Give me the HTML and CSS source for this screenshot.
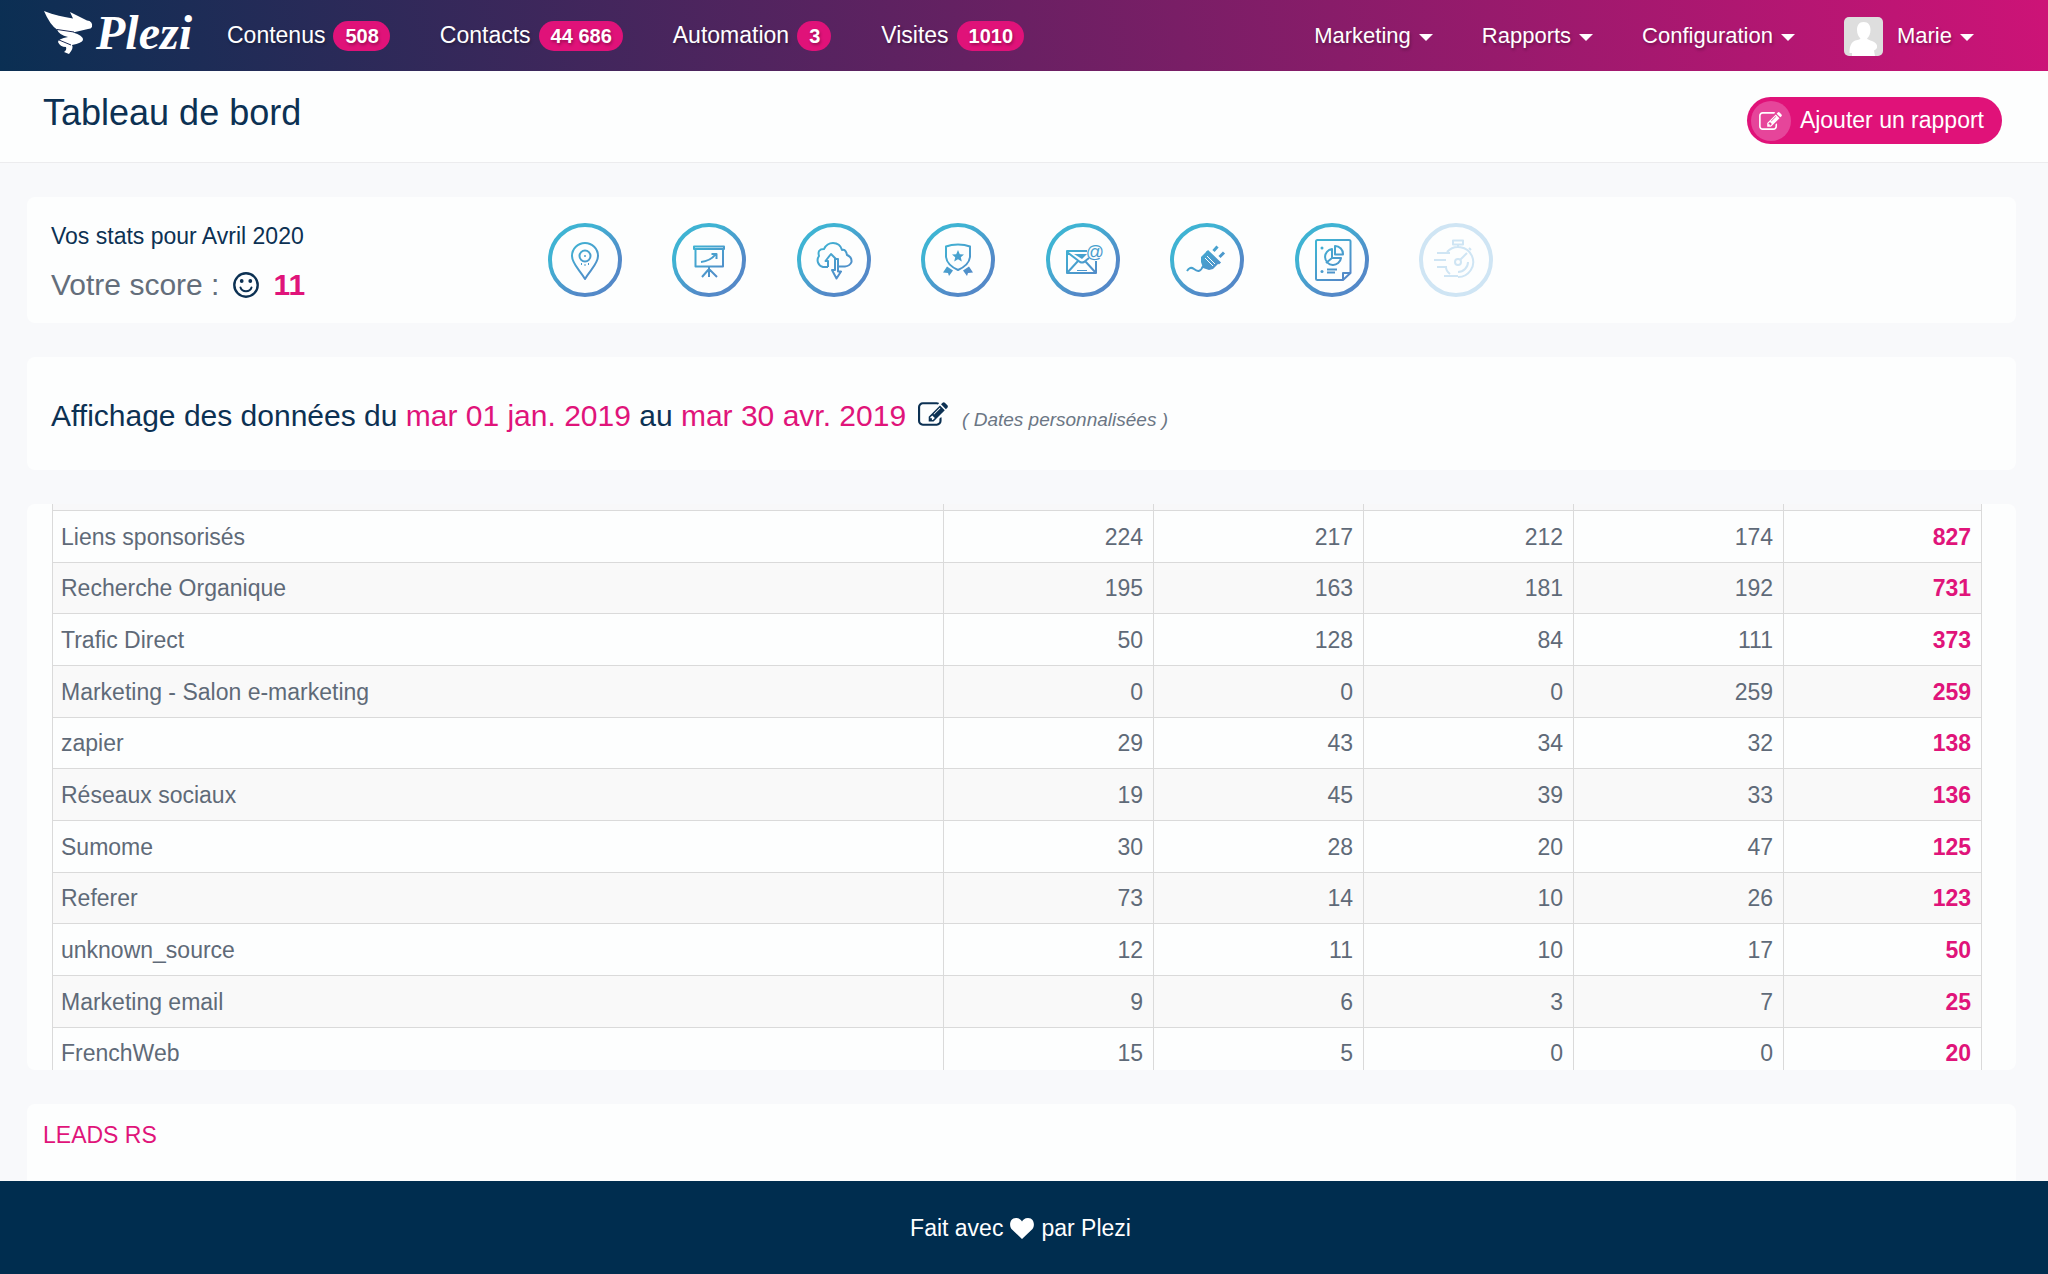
FILE: index.html
```html
<!DOCTYPE html>
<html lang="fr">
<head>
<meta charset="utf-8">
<meta name="viewport" content="width=device-width, initial-scale=1">
<title>Plezi - Tableau de bord</title>
<link rel="stylesheet" href="styles.css">
</head>
<body>
<svg class="defs" width="0" height="0" aria-hidden="true">
  <defs>
    <linearGradient id="ocean" gradientUnits="userSpaceOnUse" x1="14" y1="10" x2="60" y2="64">
      <stop offset="0.2" stop-color="#3fb3d3"/>
      <stop offset="0.8" stop-color="#5389c8"/>
    </linearGradient>
    <symbol id="edit" viewBox="0 128 1792 1408">
      <path d="M888 1184l116-116-152-152-116 116v56h96v96h56zm440-720q-16-16-33 1l-350 350q-17 17-1 33t33-1l350-350q17-17 1-33zm80 594v190q0 119-84.500 203.500t-203.500 84.500h-832q-119 0-203.500-84.500t-84.500-203.500v-832q0-119 84.500-203.500t203.500-84.500h832q63 0 117 25 15 7 18 23 3 17-9 29l-49 49q-14 14-32 8-23-6-45-6h-832q-66 0-113 47t-47 113v832q0 66 47 113t113 47h832q66 0 113-47t47-113v-126q0-13 9-22l64-64q15-15 35-7t20 29zm-96-738l288 288-672 672h-288v-288zm444 132l-92 92-288-288 92-92q28-28 68-28t68 28l152 152q28 28 28 68t-28 68z"/>
    </symbol>
  </defs>
</svg>

<header class="topbar">
  <a class="logo" href="#" aria-label="Plezi">
    <svg class="logo-wing" viewBox="0 0 50 44" aria-hidden="true">
      <path d="M0 0C10 4 20 6 29 7.500L26 1L43 9.500Q49 10 48 16Q47 18 44 18L29 21.500Q39 24 39 29Q38 32 28 34Q30 37 25 43L20 41Q23 39 22 36Q16 36 14 31Q14 28 24 26Q15 24 13 18.500Q6 14 0 0Z" fill="#fff"/>
      <path d="M13 18.500L30 21M15 29L27 34" stroke="#1c2a55" stroke-width="1" fill="none"/>
    </svg>
    <span class="logo-name">Plezi</span>
  </a>
  <nav class="nav-main">
    <a class="nav-link" href="#">Contenus <span class="badge">508</span></a>
    <a class="nav-link" href="#">Contacts <span class="badge">44 686</span></a>
    <a class="nav-link" href="#">Automation <span class="badge">3</span></a>
    <a class="nav-link" href="#">Visites <span class="badge">1010</span></a>
  </nav>
  <div class="nav-menus">
    <button class="menu" type="button">Marketing<span class="caret"></span></button>
    <button class="menu" type="button">Rapports<span class="caret"></span></button>
    <button class="menu" type="button">Configuration<span class="caret"></span></button>
    <button class="menu" type="button">
      <svg class="avatar" viewBox="0 0 39 39" aria-hidden="true">
        <rect width="39" height="39" rx="5" fill="#dedede"/>
        <path d="M19.500 5c5 0 7 3.500 7 8 0 4-1.500 6.500-3.500 8.500 1 2 9 2.500 10 7 .5 3-1 4-3 5l1 5.500H8V36H5.500c0-4 .5-9 4-11.500 2-1.500 6-1.500 7-3-2-2-3.500-4.500-3.500-8.500 0-4.500 2-8 6.500-8z" fill="#fff"/>
      </svg>Marie<span class="caret"></span></button>
  </div>
</header>

<div class="titlebar">
  <h1 class="title">Tableau de bord</h1>
  <button class="add" type="button">
    <span class="add-icon"><svg class="icon-small" aria-hidden="true"><use href="#edit"/></svg></span>Ajouter un rapport
  </button>
</div>

<main class="content">
  <section class="card stats">
    <div class="stats-text">
      <p class="stats-month">Vos stats pour Avril 2020</p>
      <p class="stats-score">Votre score :
        <svg class="smiley" viewBox="0 0 26 26" aria-hidden="true">
          <circle cx="13" cy="13" r="11.700" fill="none" stroke="#0c3153" stroke-width="2.400"/>
          <circle cx="8.700" cy="9" r="1.900" fill="#0c3153"/><circle cx="17.300" cy="9" r="1.900" fill="#0c3153"/>
          <path d="M7.500 15.500c1.500 5 9.500 5 11 0" fill="none" stroke="#0c3153" stroke-width="2" stroke-linecap="round"/>
        </svg>
        <strong class="score">11</strong></p>
    </div>
    <div class="goals">
      <svg class="goal" viewBox="0 0 74 74" role="img" aria-label="Visites">
        <circle class="ring" cx="37" cy="37" r="35"/>
        <path d="M37 56C32 47 24 41 24 33a13 13 0 0 1 26 0C50 41 42 47 37 56Z"/>
        <circle cx="37" cy="33" r="5.500"/><circle class="solid" cx="37" cy="33" r="1"/>
        <path class="thin" d="M33.500 40v2M37 41v2M40.500 40v2"/>
      </svg>
      <svg class="goal" viewBox="0 0 74 74" role="img" aria-label="Présentations">
        <circle class="ring" cx="37" cy="37" r="35"/>
        <path d="M22 23.500H52V26H22ZM23.500 26V43.500H51V26M37 43.500V54M37 46L30 54M37 46L45 54M29 39C36 38.500 40 36 44 31M39.500 31H44.500V36"/>
      </svg>
      <svg class="goal" viewBox="0 0 74 74" role="img" aria-label="Téléchargements">
        <circle class="ring" cx="37" cy="37" r="35"/>
        <path d="M31 44H26A7 7 0 0 1 22 33Q20 26 27 26Q30 20 36 20Q43 20 45 27Q49 26 50 32Q55 34 54.500 39Q53 43 48 43.500H41V36H38V47H35L39.500 55.500L44 48.500H41V43.500M31 44V38H28.500L34 31L39 36"/>
      </svg>
      <svg class="goal" viewBox="0 0 74 74" role="img" aria-label="Leads qualifiés">
        <circle class="ring" cx="37" cy="37" r="35"/>
        <path d="M37 21.500Q44 21.500 49 23.500V34Q48 42 37 47Q26 42 25 34V23.500Q30 21.500 37 21.500Z"/>
        <path class="solid" d="M37 27L38.800 31.200L43 31.500L39.800 34.300L40.800 38.500L37 36.200L33.200 38.500L34.200 34.300L31 31.500L35.200 31.200ZM26 43.500L32 47.500L28 53L27 50L22 49.500ZM48 43.500L42 47.500L46 53L47 50L52 49.500Z"/>
      </svg>
      <svg class="goal" viewBox="0 0 74 74" role="img" aria-label="Emails">
        <circle class="ring" cx="37" cy="37" r="35"/>
        <path d="M41 28H21V50H50V38M21 50L32 38M50 50L39 38M21 29L34 39Q36 40 38 39L43 35"/>
        <path class="solid" d="M28 31H41L36 36Z"/><path class="thin" d="M31 47.500H41"/>
        <text class="at" x="49" y="35" text-anchor="middle">@</text>
      </svg>
      <svg class="goal" viewBox="0 0 74 74" role="img" aria-label="Connexions">
        <circle class="ring" cx="37" cy="37" r="35"/>
        <path d="M17 48Q20 43 24 46Q30 51 33 43"/>
        <path class="solid" d="M31 34L37 28L49 40L43 46L39 47L33 45L31 39Z"/>
        <path class="thick" d="M37 28L50 40.500M43.500 28L47.500 23.500M49.500 34L54 29.500"/>
        <path class="gap" d="M35 35L43 43M37 33L45 41"/>
      </svg>
      <svg class="goal" viewBox="0 0 74 74" role="img" aria-label="Rapports">
        <circle class="ring" cx="37" cy="37" r="35"/>
        <path d="M22.500 17H54Q55.500 17 55.500 18.500V50L48 57H22.500Q21 57 21 55.500V18.500Q21 17 22.500 17ZM48 57V50H55.500M37 26A8 8 0 1 0 46 35H37ZM37 35L31 40M40 23V31.500H48A8 8 0 0 0 40 23Z"/>
        <path d="M32 46.500H42M32 49.500H40"/>
        <circle class="solid" cx="27" cy="25" r="1.500"/><circle class="solid" cx="27" cy="48.500" r="1.500"/>
      </svg>
      <svg class="goal goal-off" viewBox="0 0 74 74" role="img" aria-label="Bientôt disponible">
        <circle class="ring" cx="37" cy="37" r="35"/>
        <path d="M28 29A15 15 0 1 1 39 54M34 17.500H44V21.500H34ZM39 21.500V24M50 25L52 27M41 37L48 30M39 49A10 10 0 0 0 49 39M18 30H31M15 37H27M18 44H28M25 53H39M27 44Q27 48 31 51"/>
        <circle cx="39" cy="39" r="3"/>
      </svg>
    </div>
  </section>

  <section class="card period">
    <h2 class="period-title">Affichage des données du <span class="pink">mar 01 jan. 2019</span> au <span class="pink">mar 30 avr. 2019</span></h2>
    <svg class="icon-edit" aria-hidden="true"><use href="#edit"/></svg>
    <em class="period-note">( Dates personnalisées )</em>
  </section>

  <section class="card report">
    <table class="sources">
      <colgroup>
        <col><col class="col-month"><col class="col-month"><col class="col-month"><col class="col-month"><col class="col-total">
      </colgroup>
      <thead>
        <tr><th></th><th></th><th></th><th></th><th></th><th></th></tr>
      </thead>
      <tbody>
        <tr><td>Liens sponsorisés</td><td>224</td><td>217</td><td>212</td><td>174</td><td>827</td></tr>
        <tr><td>Recherche Organique</td><td>195</td><td>163</td><td>181</td><td>192</td><td>731</td></tr>
        <tr><td>Trafic Direct</td><td>50</td><td>128</td><td>84</td><td>111</td><td>373</td></tr>
        <tr><td>Marketing - Salon e-marketing</td><td>0</td><td>0</td><td>0</td><td>259</td><td>259</td></tr>
        <tr><td>zapier</td><td>29</td><td>43</td><td>34</td><td>32</td><td>138</td></tr>
        <tr><td>Réseaux sociaux</td><td>19</td><td>45</td><td>39</td><td>33</td><td>136</td></tr>
        <tr><td>Sumome</td><td>30</td><td>28</td><td>20</td><td>47</td><td>125</td></tr>
        <tr><td>Referer</td><td>73</td><td>14</td><td>10</td><td>26</td><td>123</td></tr>
        <tr><td>unknown_source</td><td>12</td><td>11</td><td>10</td><td>17</td><td>50</td></tr>
        <tr><td>Marketing email</td><td>9</td><td>6</td><td>3</td><td>7</td><td>25</td></tr>
        <tr><td>FrenchWeb</td><td>15</td><td>5</td><td>0</td><td>0</td><td>20</td></tr>
      </tbody>
    </table>
  </section>

  <section class="card leads">
    <h2 class="leads-title">LEADS RS</h2>
  </section>
</main>

<footer class="footer">
  <span>Fait avec</span>
  <svg class="heart" viewBox="0 0 24 21" aria-label="amour" role="img"><path d="M12 21L1.500 11C-1 8-.5 0 6 0C9.500 0 11 2 12 3.500C13 2 14.500 0 18 0C24.500 0 25 8 22.500 11Z" fill="#fff"/></svg>
  <span>par Plezi</span>
</footer>
</body>
</html>
```

FILE: styles.css
```css
* {
  box-sizing: border-box;
}

body {
  margin: 0;
  min-height: 100vh;
  display: flex;
  flex-direction: column;
  background: #f8f9fb;
  color: #0c3153;
  font-family: "Liberation Sans", Arial, Helvetica, sans-serif;
  font-size: 23px;
}

h1, h2, p {
  margin: 0;
  font-weight: 400;
}

button {
  border: 0;
  padding: 0;
  background: none;
  font: inherit;
  color: inherit;
  cursor: pointer;
}

.defs {
  position: absolute;
}

.pink {
  color: #e0147a;
}

/* Top navigation */
.topbar {
  display: flex;
  align-items: center;
  height: 71px;
  padding: 0 74px 0 44px;
  background: linear-gradient(80deg, #0a2f53, #6a2063 50%, #cd1377);
  color: #fff;
}

.logo {
  display: flex;
  align-items: center;
  gap: 2px;
  width: 183px;
  padding-bottom: 6px;
  color: #fff;
  text-decoration: none;
}

.logo-wing {
  width: 50px;
  height: 44px;
}

.logo-name {
  font: italic bold 48px/56px "Liberation Serif", "Times New Roman", serif;
}

.nav-main {
  display: flex;
  gap: 50px;
}

.nav-link {
  display: flex;
  align-items: center;
  gap: 8px;
  color: #fff;
  text-decoration: none;
  text-shadow: 1px 2px 3px rgba(0, 0, 0, 0.3);
}

.badge {
  padding: 0 11px 0 12px;
  border-radius: 15px;
  background: #e01279;
  font-size: 20px;
  font-weight: 700;
  line-height: 30px;
}

.nav-menus {
  display: flex;
  align-items: center;
  gap: 49px;
  margin-left: auto;
  font-size: 22px;
}

.menu {
  display: flex;
  align-items: center;
  text-shadow: 1px 2px 3px rgba(0, 0, 0, 0.3);
}

.caret {
  margin: 3px 0 0 8px;
  border: 7px solid transparent;
  border-top-color: #fff;
  border-bottom: 0;
}

.avatar {
  width: 39px;
  height: 39px;
  margin: 2px 14px 0 0;
}

/* Page title */
.titlebar {
  display: flex;
  justify-content: space-between;
  align-items: flex-start;
  padding: 21px 46px 18px 43px;
  border-bottom: 1px solid #ececee;
  background: #fdfefe;
}

.title {
  font-size: 36px;
  line-height: 42px;
}

.add {
  display: flex;
  align-items: center;
  gap: 9px;
  height: 47px;
  margin-top: 5px;
  padding: 0 18px 0 4px;
  border-radius: 24px;
  background: #e01279;
  color: #fff;
}

.add-icon {
  display: flex;
  align-items: center;
  justify-content: center;
  width: 40px;
  height: 40px;
  border-radius: 50%;
  background: #e6459a;
}

.icon-small {
  width: 23px;
  height: 18px;
  fill: #fff;
}

/* Cards */
.content {
  flex: 1;
  display: flex;
  flex-direction: column;
  gap: 34px;
  padding: 34px 32px 0 27px;
}

.card {
  border-radius: 8px;
  background: #fdfefe;
}

.stats {
  display: flex;
  align-items: flex-start;
  padding: 24px 24px 18px;
}

.stats-text {
  flex: 0 0 497px;
}

.stats-month {
  font-size: 23px;
  line-height: 30px;
  margin-bottom: 14px;
}

.stats-score {
  display: flex;
  align-items: center;
  color: #646e7b;
  font-size: 30px;
  line-height: 40px;
}

.smiley {
  width: 26px;
  height: 26px;
  margin: 0 14px;
}

.score {
  color: #e0147a;
}

.goals {
  flex: 0 1 945px;
  display: flex;
  justify-content: space-between;
  margin-top: 2px;
}

.goal {
  width: 74px;
  height: 74px;
  fill: none;
  stroke: url(#ocean);
  stroke-width: 2;
  stroke-linejoin: round;
}

.goal .ring {
  stroke-width: 4;
}

.goal .thin {
  stroke-width: 1;
}

.goal .thick {
  stroke-width: 3;
}

.goal .gap {
  stroke: #fdfefe;
  stroke-width: 1;
}

.goal .solid {
  fill: url(#ocean);
  stroke: none;
}

.goal .at {
  fill: url(#ocean);
  stroke: none;
  font-size: 18px;
}

.goal-off {
  stroke: #cfe5f4;
}

.period {
  display: flex;
  align-items: baseline;
  padding: 39px 24px 34px;
}

.period-title {
  font-size: 30px;
  line-height: 40px;
}

.icon-edit {
  width: 30px;
  height: 24px;
  margin: 0 14px 0 12px;
  fill: #0c3153;
}

.period-note {
  color: #6b7684;
  font-size: 19px;
}

/* Report table, cut off by its card */
.report {
  height: 566px;
  padding: 0 34px 0 25px;
  overflow: hidden;
}

.sources {
  width: 100%;
  table-layout: fixed;
  border-collapse: collapse;
  color: #5f6a78;
}

.col-month {
  width: 210px;
}

.col-total {
  width: 198px;
}

.sources th {
  height: 6px;
  padding: 0;
  border: 1px solid #dadada;
  border-top: 0;
  background: #f8f8f9;
}

.sources td {
  height: 52px;
  padding: 2px 10px 0;
  border: 1px solid #dadada;
  text-align: right;
}

.sources tr:nth-child(3n+2) td {
  height: 51px;
}

.sources tr:nth-child(even) td {
  background: #f9f9f9;
}

.sources td:first-child {
  padding-left: 8px;
  text-align: left;
}

.sources td:last-child {
  color: #e0147a;
  font-weight: 700;
}

.leads {
  flex: 1;
  padding: 16px 16px 31px;
  border-radius: 8px 8px 0 0;
}

.leads-title {
  color: #e0147a;
  font-size: 23px;
  line-height: 30px;
}

/* Footer */
.footer {
  display: flex;
  align-items: center;
  justify-content: center;
  gap: 7px;
  padding: 32px 7px 31px 0;
  background: #002d4f;
  color: #fff;
  line-height: 30px;
}

.heart {
  width: 24px;
  height: 21px;
}
```
